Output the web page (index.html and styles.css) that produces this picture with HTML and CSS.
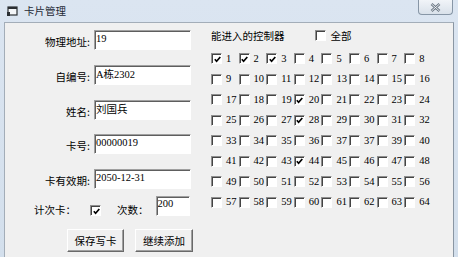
FILE: index.html
```html
<!DOCTYPE html>
<html>
<head>
    <meta charset="utf-8">
    <title>卡片管理</title>
    <link rel="stylesheet" href="styles.css">
</head>
<body>
    <div class="window">
        <div class="titlebar">
            <svg class="app-icon" width="11" height="10" viewBox="0 0 11 10">
                <rect x="1" y="1" width="9" height="8" fill="#f4f6f8" stroke="#2b2f33" stroke-width="1.2"/>
                <rect x="1" y="1" width="9" height="2" fill="#2b2f33"/>
                <rect x="0" y="6" width="3" height="4" fill="#2b2f33"/>
            </svg>
            <span class="title">卡片管理</span>
            <div class="close-btn">
                <svg width="11" height="9" viewBox="0 0 11 9">
                    <path d="M1.5 1 L9.5 8 M9.5 1 L1.5 8" stroke="#6b7784" stroke-width="2.6" fill="none"/>
                    <path d="M1.5 1 L9.5 8 M9.5 1 L1.5 8" stroke="#f4f6f8" stroke-width="0.9" fill="none"/>
                </svg>
            </div>
        </div>

        <div class="client">
            <!-- 卡片信息 -->
            <div class="card-form">
                <div class="fields">
                    <label>物理地址:</label>
                    <input class="field" type="text" value="19">
                    <label>自编号:</label>
                    <input class="field" type="text" value="A栋2302">
                    <label>姓名:</label>
                    <input class="field" type="text" value="刘国兵">
                    <label>卡号:</label>
                    <input class="field" type="text" value="00000019">
                    <label>卡有效期:</label>
                    <input class="field" type="text" value="2050-12-31">
                </div>

                <div class="count-row">
                    <span class="count-label">计次卡：</span>
                    <span class="check on"><svg width="7" height="7" viewBox="0 0 7 7"><path d="M0.8 3.2 L2.6 5.2 L6.3 1" stroke="#000" stroke-width="1.7" fill="none"/></svg></span>
                    <span class="times-label">次数：</span>
                    <input class="field times" type="text" value="200">
                </div>

                <div class="actions">
                    <button class="save-btn">保存写卡</button>
                    <button class="add-btn">继续添加</button>
                </div>
            </div>

            <!-- 控制器权限 -->
            <div class="doors">
                <div class="doors-head">
                    <span>能进入的控制器</span>
                    <span class="check all-check"></span>
                    <span class="all-label">全部</span>
                </div>
                <div class="door-grid" id="door-grid"></div>
            </div>
        </div>
    </div>

    <script>
        const checked = [1, 2, 3, 20, 28, 44];
        const grid = document.getElementById('door-grid');
        const tick = '<svg width="7" height="7" viewBox="0 0 7 7"><path d="M0.8 3.2 L2.6 5.2 L6.3 1" stroke="#000" stroke-width="1.7" fill="none"/></svg>';

        for (let i = 1; i <= 64; i++) {
            let caption = i === 38 ? '37' : String(i); // popisek 38 je v originále 37
            const cell = document.createElement('div');
            cell.className = 'door';
            const on = checked.includes(i);
            cell.innerHTML = `<span class="check${on ? ' on' : ''}">${on ? tick : ''}</span><span class="num">${caption}</span>`;
            grid.appendChild(cell);
        }
    </script>
</body>
</html>
```

FILE: styles.css
```css
body {
    margin: 0;
    background-color: #d6e1ed;
    font-family: "Liberation Serif", "Noto Sans CJK SC", serif;
    font-size: 10.5px;
    color: #000;
}
.window {
    width: 458px;
    height: 257px;
    display: flex;
    flex-direction: column;
    background: linear-gradient(#dbe5f1, #d3dfec);
    overflow: hidden;
}
.titlebar {
    height: 22px;
    display: flex;
    align-items: flex-start;
    flex-shrink: 0;
}
.app-icon {
    margin: 6px 0 0 7px;
}
.title {
    margin: 4px 0 0 6px;
    line-height: 14px;
    font-family: "Noto Sans CJK SC", sans-serif;
    font-size: 10.5px;
    color: #1f2a36;
}
.close-btn {
    margin-left: auto;
    margin-right: 5px;
    width: 33px;
    height: 14px;
    border: 1px solid #8796a6;
    border-top: none;
    border-radius: 0 0 4px 4px;
    background: linear-gradient(#f1f4f8, #d9e1ea);
    display: flex;
    align-items: center;
    justify-content: center;
}
.client {
    flex: 1;
    margin-left: 4px;
    width: 448px;
    display: flex;
    background-color: #f0f0f0;
    border-top: 1px solid #a3adb8;
    border-left: 1px solid #a3adb8;
    border-right: 1px solid #8a96a3;
}
.card-form {
    width: 200px;
    padding-top: 7px;
}
.fields {
    display: grid;
    grid-template-columns: 85px 97px;
    column-gap: 4px;
    row-gap: 14.75px;
    grid-auto-rows: 20px;
}
.fields label {
    text-align: right;
    padding-top: 4px;
    line-height: 16px;
    font-family: "Noto Sans CJK SC", sans-serif;
}
.field {
    box-sizing: border-box;
    width: 97px;
    height: 20px;
    margin: 0;
    padding: 0 2px 3px 1px;
    border: 1px solid;
    border-color: #a0a0a0 #ffffff #ffffff #a0a0a0;
    box-shadow: inset 1px 1px 0 #5e5e5e;
    background: #ffffff;
    font-family: "Liberation Serif", "Noto Sans CJK SC", serif;
    font-size: 10.5px;
    color: #000;
    outline: none;
}
.check {
    box-sizing: border-box;
    width: 11px;
    height: 11px;
    flex-shrink: 0;
    border: 1px solid;
    border-color: #8f8f8f #ffffff #ffffff #8f8f8f;
    box-shadow: inset 1px 1px 0 #444444;
    background: #ffffff;
    display: flex;
    align-items: center;
    justify-content: center;
    padding: 1px 0 0 1px;
}
.count-row {
    margin-top: 7px;
    height: 20px;
    display: flex;
    align-items: flex-start;
    font-family: "Noto Sans CJK SC", sans-serif;
}
.count-label {
    margin: 6px 0 0 29px;
    line-height: 16px;
}
.count-row .check {
    margin: 9px 0 0 14px;
}
.times-label {
    margin: 6px 0 0 16px;
    line-height: 16px;
}
.times {
    width: 34px;
    margin-left: 7px;
    padding-bottom: 6px;
}
.actions {
    margin-top: 13px;
    display: flex;
    gap: 11px;
    padding-left: 62px;
}
.actions button {
    box-sizing: border-box;
    height: 23px;
    margin: 0;
    padding: 0;
    border: 1px solid;
    border-color: #ffffff #696969 #696969 #ffffff;
    box-shadow: inset -1px -1px 0 #a0a0a0;
    background-color: #f0f0f0;
    font-family: "Noto Sans CJK SC", sans-serif;
    font-size: 10.5px;
    color: #000;
}
.save-btn {
    width: 57px;
}
.add-btn {
    width: 58px;
}
.doors {
    padding: 4px 0 0 6px;
}
.doors-head {
    height: 16px;
    display: flex;
    align-items: center;
    font-family: "Noto Sans CJK SC", sans-serif;
}
.all-check {
    margin-left: 30px;
}
.all-label {
    margin-left: 5px;
}
.door-grid {
    margin-top: 5.5px;
    display: grid;
    grid-template-columns: repeat(8, 27.6px);
    grid-auto-rows: 20.5px;
}
.door {
    display: flex;
    align-items: center;
}
.num {
    margin-left: 4px;
    line-height: 12px;
}
```
